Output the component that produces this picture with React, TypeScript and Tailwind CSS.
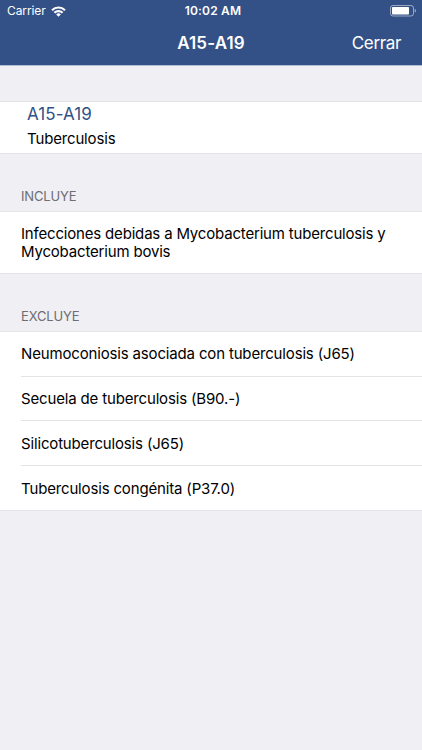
import React from 'react';

const exclusions = [
  'Neumoconiosis asociada con tuberculosis (J65)',
  'Secuela de tuberculosis (B90.-)',
  'Silicotuberculosis (J65)',
  'Tuberculosis congénita (P37.0)',
];

const StatusBar = () => (
  <div className="grid grid-cols-3 items-center h-[22px] pl-[7px] pr-[5px]">
    <div className="flex items-center gap-[5px]">
      <span className="text-[12px] tracking-[-0.1px]">Carrier</span>
      <svg width="15" height="11" viewBox="0 0 15 11" fill="none" stroke="currentColor" strokeWidth="2.1">
        <path d="M1 4.2a9.2 9.2 0 0 1 13 0" />
        <path d="M3.4 6.8a5.8 5.8 0 0 1 8.2 0" />
        <path d="M7.5 10.8 5.2 8.5a3.2 3.2 0 0 1 4.6 0z" fill="currentColor" stroke="none" />
      </svg>
    </div>
    <span className="text-center text-[12px] font-semibold tracking-[0.17px] pl-[2px]">10:02 AM</span>
    <svg className="justify-self-end" width="27" height="12" viewBox="0 0 27 12" fill="none">
      <rect x="0.5" y="0.5" width="23" height="10.5" rx="2.5" stroke="currentColor" strokeOpacity="0.5" />
      <rect x="2" y="2" width="17" height="7.5" rx="0.8" fill="currentColor" />
      <path d="M24.7 4v3.6c.9-.3 1.4-1 1.4-1.8s-.5-1.5-1.4-1.8z" fill="currentColor" fillOpacity="0.5" />
    </svg>
  </div>
);

const SectionTitle = ({ children }: { children: React.ReactNode }) => (
  <h2 className="flex items-end h-[57px] pl-[21px] pb-[6px] text-[13px] leading-[18px] tracking-[-0.15px] text-[#6d6d72]">
    {children}
  </h2>
);

export default function App() {
  return (
    <div className="min-h-screen bg-[#efeff4] text-black font-['Inter',sans-serif]">
      <header className="h-[66px] bg-[#335187] border-b border-[#b4c0d6] text-white">
        <StatusBar />
        <div className="grid grid-cols-3 items-center h-[43px] pr-[21px]">
          <h1 className="col-start-2 text-center text-[17px] font-semibold pl-[21px] tracking-[0.15px]">A15-A19</h1>
          <button className="justify-self-end text-[17px] tracking-[-0.35px]">Cerrar</button>
        </div>
      </header>

      <div className="mt-[35px] h-[53px] bg-white border-y border-[#e4e4e8] pl-[27px]">
        <p className="text-[17px] leading-6 tracking-[0.1px] text-[#335187]">A15-A19</p>
        <p className="text-[15px] leading-[25px] tracking-[-0.16px]">Tuberculosis</p>
      </div>

      <SectionTitle>INCLUYE</SectionTitle>
      <div className="flex items-center h-[63px] bg-white border-y border-[#e4e4e8] px-[21px] pt-px text-[15px] leading-[18px] tracking-[-0.18px]">
        Infecciones debidas a Mycobacterium tuberculosis y Mycobacterium bovis
      </div>

      <SectionTitle>EXCLUYE</SectionTitle>
      <ul className="bg-white border-y border-[#e4e4e8] pl-[21px] text-[15px] tracking-[-0.16px]">
        {exclusions.map((item) => (
          <li key={item} className="flex items-center h-[44.7px] pt-[1.6px] border-b border-[#e4e4e8] last:h-[44px] last:border-b-0">
            {item}
          </li>
        ))}
      </ul>
    </div>
  );
}
